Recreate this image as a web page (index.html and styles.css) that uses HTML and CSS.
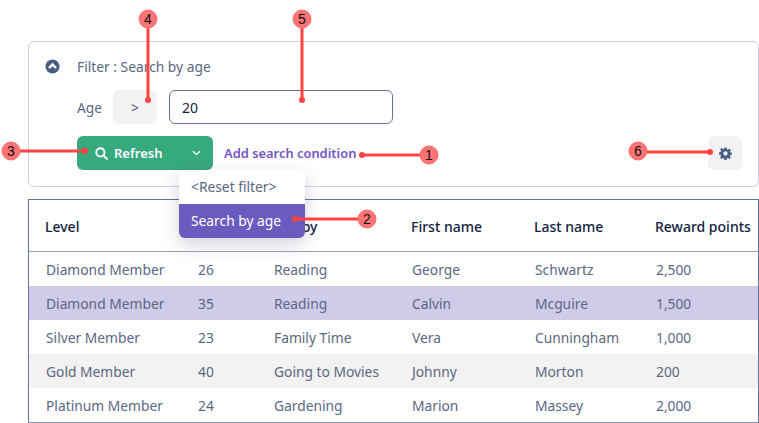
FILE: index.html
```html
<!DOCTYPE html>
<html lang="en">
<head>
<meta charset="utf-8">
<title>Filter</title>
<link rel="stylesheet" href="styles.css">
</head>
<body>
<div class="page">
  <section class="filter">
    <div class="filter-title">
      <svg class="collapse" viewBox="0 0 16 16" width="15" height="15"><circle cx="8" cy="8" r="7.5" fill="#4a5d85"/><path d="M4.2 9.6 8 5.9l3.8 3.7" fill="none" stroke="#fff" stroke-width="2.6"/></svg>
      <span>Filter : Search by age</span>
    </div>
    <div class="cond-row">
      <span class="cond-label">Age</span>
      <button class="op">&gt;</button>
      <input class="value" value="20">
    </div>
    <div class="action-row">
      <div class="split">
        <button class="refresh">
          <svg viewBox="0 0 14 14" width="13" height="13"><circle cx="5.8" cy="5.8" r="4.4" fill="none" stroke="#fff" stroke-width="2"/><path d="m9 9 3.8 3.8" stroke="#fff" stroke-width="2.2" stroke-linecap="round"/></svg>
          Refresh
        </button>
        <button class="caret"><svg viewBox="0 0 10 6" width="9" height="6"><path d="M1 1l4 3.6L9 1" fill="none" stroke="#fff" stroke-width="1.5"/></svg></button>
        <div class="menu">
          <div class="menu-item">&lt;Reset filter&gt;</div>
          <div class="menu-item active">Search by age</div>
        </div>
      </div>
      <a class="add-link">Add search condition</a>
      <button class="gear">
        <svg viewBox="0 0 24 24" width="13" height="13"><path fill="#4a5d85" fill-rule="evenodd" d="M10 1h4l.6 3.2 1.9.8 2.7-1.8 2.8 2.8-1.8 2.7.8 1.9L24 10v4l-3 .6-.8 1.9 1.8 2.7-2.8 2.8-2.7-1.8-1.9.8L14 24h-4l-.6-3-1.9-.8-2.7 1.8-2.8-2.8 1.8-2.7-.8-1.9L0 14v-4l3-.6.8-1.9L2 4.800l2.800-2.800 2.700 1.800 1.900-.8zM12 8a4 4 0 1 0 0 8 4 4 0 0 0 0-8z"/></svg>
      </button>
    </div>
  </section>
  <div class="table-wrap">
    <table>
      <thead>
        <tr><th class="c1">Level</th><th class="c2">Age</th><th class="c3">Hobby</th><th class="c4">First name</th><th class="c5">Last name</th><th class="c6">Reward points</th></tr>
      </thead>
      <tbody>
        <tr><td>Diamond Member</td><td>26</td><td>Reading</td><td>George</td><td>Schwartz</td><td>2,500</td></tr>
        <tr class="selected"><td>Diamond Member</td><td>35</td><td>Reading</td><td>Calvin</td><td>Mcguire</td><td>1,500</td></tr>
        <tr><td>Silver Member</td><td>23</td><td>Family Time</td><td>Vera</td><td>Cunningham</td><td>1,000</td></tr>
        <tr class="alt"><td>Gold Member</td><td>40</td><td>Going to Movies</td><td>Johnny</td><td>Morton</td><td>200</td></tr>
        <tr><td>Platinum Member</td><td>24</td><td>Gardening</td><td>Marion</td><td>Massey</td><td>2,000</td></tr>
      </tbody>
    </table>
  </div>
  <svg class="callouts" width="759" height="423" viewBox="0 0 759 423">
    <g class="lines">
      <path d="M362 155H429M295 219H367M12 151H85M148 20V100M302 20V100M637 152H710"/>
    </g>
    <g class="dots">
      <circle cx="362" cy="155" r="3"/><circle cx="295" cy="219" r="3"/><circle cx="85" cy="151" r="3"/><circle cx="148" cy="100" r="3"/><circle cx="302" cy="100" r="3"/><circle cx="710" cy="152" r="3"/>
    </g>
    <g class="badges">
      <circle cx="429" cy="155" r="9"/><circle cx="367" cy="219" r="9"/><circle cx="11" cy="151" r="9"/><circle cx="148" cy="19" r="9"/><circle cx="302" cy="19" r="9"/><circle cx="638" cy="151" r="9"/>
    </g>
    <g class="nums">
      <text x="429" y="160">1</text><text x="367" y="224">2</text><text x="11" y="156">3</text><text x="148" y="24">4</text><text x="302" y="24">5</text><text x="638" y="156">6</text>
    </g>
  </svg>
</div>
</body>
</html>
```
FILE: styles.css
```css
* { box-sizing: border-box; }
html, body { margin: 0; padding: 0; background: #fff; }
body { font-family: "Noto Sans", sans-serif; font-size: 13.8px; color: #4a5670; }
.page { position: relative; width: 759px; height: 423px; overflow: hidden; padding: 41px 0 0 28px; }
.filter { width: 731px; height: 146px; border: 1px solid #d1cdea; border-radius: 6px; padding: 14px 16px 0 16px; }
.filter-title { display: flex; align-items: center; gap: 17px; height: 20px; color: #5a6781; }
.collapse { flex: none; }
.cond-row { display: flex; align-items: center; margin: 14px 0 0 32px; height: 34px; }
.cond-label { width: 36px; color: #5a6781; }
.op { width: 44px; height: 34px; margin-right: 12px; border: 0; border-radius: 6px; background: #f2f2f2; color: #4a5670; font: 13.8px "Noto Sans", sans-serif; }
.value { width: 224px; height: 34px; border: 1px solid #65759b; border-radius: 6px; padding: 0 12px; font: 14px "Noto Sans", sans-serif; color: #12233f; }
.action-row { display: flex; align-items: center; margin: 12px 0 0 32px; height: 34px; }
.split { position: relative; display: flex; width: 136px; height: 34px; background: #36a97e; border-radius: 6px; }
.refresh { display: flex; align-items: center; gap: 6px; width: 103px; padding: 0 0 0 18px; border: 0; background: none; color: #fff; font: 600 13px "Noto Sans", sans-serif; }
.caret { flex: 1; border: 0; background: none; padding: 0; display: flex; align-items: center; justify-content: center; }
.menu { position: absolute; left: 102px; top: 34px; width: 126px; background: #fff; border-radius: 6px; box-shadow: 0 6px 18px rgba(50, 50, 90, .22); overflow: hidden; z-index: 2; }
.menu-item { height: 34px; line-height: 34px; padding-left: 12px; color: #5a6781; }
.menu-item.active { background: #6c5bbf; color: #fff; }
.add-link { margin-left: 11px; color: #7255c4; font-weight: 600; font-size: 12.9px; }
.gear { display: flex; align-items: center; justify-content: center; margin-left: auto; width: 34px; height: 34px; border: 0; border-radius: 6px; background: #f2f2f2; padding: 0; }
.table-wrap { width: 731px; height: 224px; margin-top: 12px; border: 1px solid #65759b; border-bottom-color: #8794b8; overflow: hidden; }
table { width: 729px; border-collapse: separate; border-spacing: 0; table-layout: fixed; }
th { height: 52px; padding: 2px 0 0 16px; text-align: left; font-weight: 500; font-size: 14px; color: #12233f; border-bottom: 1px solid #9aa3bc; white-space: nowrap; }
td { height: 34px; padding: 0 0 0 17px; white-space: nowrap; color: #5a6781; }
.c1 { width: 152px; } .c2 { width: 77px; } .c3 { width: 137px; } .c4 { width: 123px; } .c5 { width: 121px; } .c6 { width: 119px; }
td:nth-child(3) { padding-left: 16px; }
.selected td { background: #d0cbe9; }
.alt td { background: #f2f2f2; }
.callouts { position: absolute; left: 0; top: 0; z-index: 5; pointer-events: none; }
.lines path { fill: none; stroke: #ff4343; stroke-width: 3; }
.dots circle { fill: #ff4343; }
.badges circle { fill: #ff7474; stroke: #ff6a6a; }
.nums text { font: 14px "Liberation Sans", sans-serif; text-anchor: middle; fill: #111; }
```
